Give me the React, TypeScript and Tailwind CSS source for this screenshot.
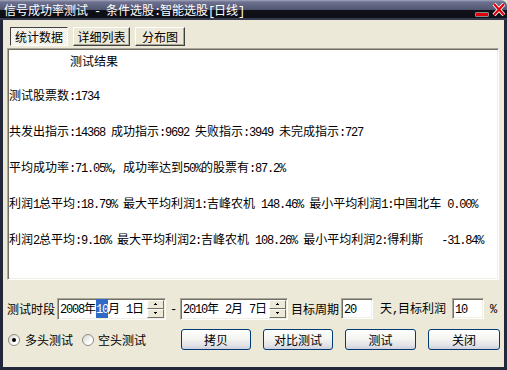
import React from 'react';

function T({ s, className = '' }: { s: string; className?: string }) {
  const parts = s.split(/([\x00-\x7f]+)/).filter((p) => p.length);
  return (
    <span className={`whitespace-pre ${className}`}>
      {parts.map((p, i) =>
        /^[\x00-\x7f]+$/.test(p) ? (
          <span key={i} className="font-['Liberation_Mono',monospace] text-[12px] tracking-[-1.2px]">
            {p}
          </span>
        ) : (
          <span key={i} className="font-['Noto_Sans_CJK_SC',sans-serif] text-[12px]">
            {p}
          </span>
        )
      )}
    </span>
  );
}

function Spinner() {
  const btn =
    'w-[17px] h-[9px] bg-[#ece9d8] border border-t-white border-l-white border-r-[#716f64] border-b-[#716f64] flex items-center justify-center';
  return (
    <div className="flex flex-col ml-auto mr-[1px]">
      <div className={btn}>
        <svg width="3" height="2" viewBox="0 0 3 2">
          <path d="M1 0h1v1h1v1H0V1h1z" fill="#000" />
        </svg>
      </div>
      <div className={btn}>
        <svg width="3" height="2" viewBox="0 0 3 2">
          <path d="M0 0h3v1H2v1H1V1H0z" fill="#000" />
        </svg>
      </div>
    </div>
  );
}

const sunken =
  'bg-white border border-t-[#aca899] border-l-[#aca899] border-r-white border-b-white shadow-[inset_1px_1px_0_#716f64,inset_-1px_-1px_0_#f1efe2]';

function Radio({ checked }: { checked?: boolean }) {
  return (
    <div className="w-[12px] h-[12px] rounded-full border border-[#8c8c86] bg-[linear-gradient(135deg,#d6d4cc,#ffffff_70%)] flex items-center justify-center">
      {checked && <div className="w-[4px] h-[4px] rounded-full bg-black" />}
    </div>
  );
}

function Btn({ label, w }: { label: string; w: string }) {
  return (
    <div
      className={`${w} h-[21px] rounded-[3px] border border-[#003c74] bg-[linear-gradient(#ffffff,#f4f4f0_45%,#e3e3e8_80%,#cfd0dc)] flex items-center justify-center leading-[16px]`}
    >
      <T s={label} />
    </div>
  );
}

export default function App() {
  const lines = [
    '测试股票数:1734',
    '共发出指示:14368 成功指示:9692 失败指示:3949 未完成指示:727',
    '平均成功率:71.05%, 成功率达到50%的股票有:87.2%',
    '利润1总平均:18.79% 最大平均利润1:吉峰农机 148.46% 最小平均利润1:中国北车 0.00%',
    '利润2总平均:9.16% 最大平均利润2:吉峰农机 108.26% 最小平均利润2:得利斯   -31.84%',
  ];
  const raised =
    'border border-t-white border-l-white border-r-[#404040] border-b-[#404040] shadow-[inset_-1px_-1px_0_#aca899]';
  return (
    <div className="w-[507px] h-[370px] flex flex-col bg-[#ece9d8] text-black overflow-hidden">
      <div className="h-[20px] shrink-0 flex items-center pl-[4px] pr-[2px] rounded-tr-[6px] bg-[linear-gradient(#a3a6bb_0px,#6d7190_2px,#50556f_10px,#101019_10px,#0d0e16_18px,#363b4f_18px,#363b4f_20px)] text-white leading-[16px]">
        <T s="信号成功率测试 - 条件选股:智能选股[日线]" />
        <svg className="ml-auto" width="31" height="20" viewBox="0 0 31 20">
          <rect x="1.5" y="12.5" width="13" height="4" fill="#fff" />
          <rect x="2" y="13" width="12" height="3" fill="#e0000b" />
          <path d="M20 4 L30 15 M30 4 L20 15" stroke="#fff" strokeWidth="4" />
          <path d="M20 4 L30 15 M30 4 L20 15" stroke="#e0000b" strokeWidth="2.2" />
        </svg>
      </div>
      <div className="flex-1 flex flex-col border-x-[3px] border-b-[3px] border-[#23273a]">
        <div className="mt-[7px] pl-[7px] flex gap-[5px] h-[19px] leading-[16px]">
          <div className="w-[58px] h-[19px] flex items-center justify-center border border-t-[#404040] border-l-[#404040] border-r-white border-b-white bg-[image:repeating-conic-gradient(#ffffff_0_25%,#ece9d8_0_50%)] bg-size-[2px_2px]">
            <T s="统计数据" />
          </div>
          <div className={`w-[57px] h-[19px] flex items-center justify-center ${raised}`}>
            <T s="详细列表" />
          </div>
          <div className={`w-[50px] h-[19px] flex items-center justify-center ${raised}`}>
            <T s="分布图" />
          </div>
        </div>
        <div className={`mt-[2px] ml-[4px] w-[492px] h-[232px] pt-[3px] ${sunken}`}>
          <div className="leading-[16px] mb-[17px] pl-[62px]">
            <T s="测试结果" />
          </div>
          {lines.map((l, i) => (
            <div key={i} className="leading-[16px] mb-[17px] pl-[1px]">
              <T s={l} />
            </div>
          ))}
        </div>
        <div className="mt-[18px] h-[21px] flex items-center ml-[4px] leading-[16px]">
          <T s="测试时段" />
          <div className={`ml-[2px] w-[109px] h-[22px] flex items-center pl-[2px] ${sunken}`}>
            <T s="2008年" />
            <span className="bg-[#316ac5] text-white">
              <T s="10" />
            </span>
            <T s="月 1日" />
            <Spinner />
          </div>
          <span className="ml-[4px]">
            <T s="-" />
          </span>
          <div className={`ml-[4px] w-[108px] h-[22px] flex items-center pl-[2px] ${sunken}`}>
            <T s="2010年 2月 7日" />
            <Spinner />
          </div>
          <span className="ml-[3px]">
            <T s="目标周期" />
          </span>
          <div className={`ml-[2px] w-[32px] h-[21px] flex items-center pl-[2px] ${sunken}`}>
            <T s="20" />
          </div>
          <span className="ml-[7px]">
            <T s="天,目标利润" />
          </span>
          <div className={`ml-[6px] w-[32px] h-[21px] flex items-center pl-[2px] ${sunken}`}>
            <T s="10" />
          </div>
          <span className="ml-[6px]">
            <T s="%" />
          </span>
        </div>
        <div className="mt-[10px] h-[21px] flex items-center leading-[16px]">
          <div className="ml-[5px]">
            <Radio checked />
          </div>
          <span className="ml-[5px]">
            <T s="多头测试" />
          </span>
          <div className="ml-[9px]">
            <Radio />
          </div>
          <span className="ml-[4px]">
            <T s="空头测试" />
          </span>
          <div className="ml-[35px] flex gap-[12px]">
            <Btn label="拷贝" w="w-[70px]" />
            <Btn label="对比测试" w="w-[70px]" />
            <Btn label="测试" w="w-[71px]" />
            <Btn label="关闭" w="w-[72px]" />
          </div>
        </div>
      </div>
    </div>
  );
}
